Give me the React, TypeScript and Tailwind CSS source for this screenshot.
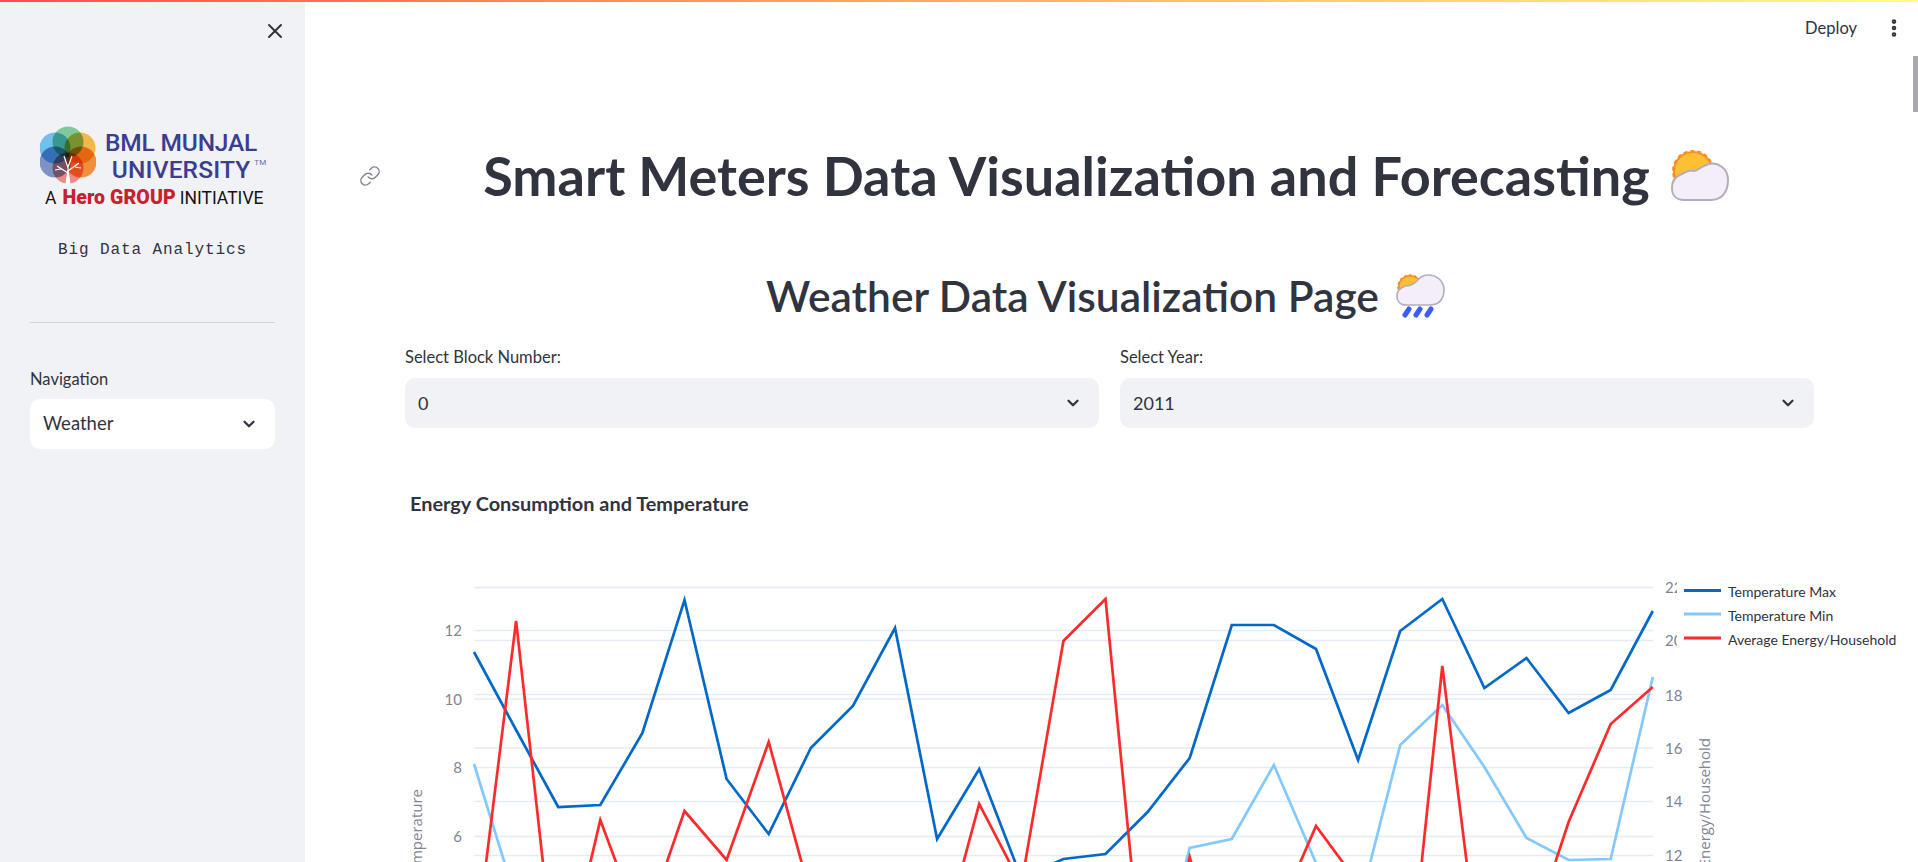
import { Link, X, ChevronDown, EllipsisVertical } from 'lucide-react';

const sans = "font-['Lato',sans-serif]";

const xAt = (i: number) => 474 + i * 42.1;
const toPoints = (ys: number[]) => ys.map((y, i) => `${xAt(i).toFixed(1)},${y}`).join(' ');

const tempMax = [652, 730, 807, 805, 733, 600, 779, 834, 748, 706, 628, 839, 769, 878, 859, 854, 812, 758, 625, 625, 649, 760, 631, 599, 688, 658, 713, 690, 611];
const tempMin = [764, 900, 960, 960, 960, 960, 960, 960, 960, 960, 960, 960, 960, 960, 960, 960, 1000, 848, 839, 765, 863, 910, 745, 705, 767, 838, 860, 859, 677];
const avgEnergy = [960, 621, 1000, 820, 933, 811, 860, 742, 896, 960, 960, 960, 804, 885, 641, 599, 1030, 857, 1000, 923, 826, 883, 1067, 666, 1005, 950, 822, 724, 687];

const gridLines = [587.5, 630.5, 640.5, 694.5, 699, 748, 767.5, 801.5, 836.5, 855.5];
const leftTicks = [{ label: '12', y: 631 }, { label: '10', y: 700 }, { label: '8', y: 768 }, { label: '6', y: 837 }];
const rightTicks = [{ label: '22', y: 588 }, { label: '20', y: 641 }, { label: '18', y: 696 }, { label: '16', y: 749 }, { label: '14', y: 802 }, { label: '12', y: 856 }];
const legend = [
    { label: 'Temperature Max', color: '#0068c9', y: 590.5 },
    { label: 'Temperature Min', color: '#83c9ff', y: 614 },
    { label: 'Average Energy/Household', color: '#ff2b2b', y: 638 },
];

function UniversityLogo() {
    // six overlapping petals, the overlaps darken towards the middle
    const petals = [
        { cx: 28, cy: 16, c: '#7fc99a' },
        { cx: 40, cy: 22, c: '#f4b84a' },
        { cx: 41, cy: 36, c: '#f08f3c' },
        { cx: 28, cy: 42, c: '#ee8a84' },
        { cx: 15, cy: 36, c: '#7c93c4' },
        { cx: 15, cy: 22, c: '#6fc0ee' },
    ];
    return (
        <div className="flex flex-col items-start w-[235px]">
            <div className="flex items-center h-[62px]">
                <svg width="56" height="60" viewBox="0 0 56 60" className="shrink-0 ml-[10px] isolate">
                    {petals.map((p) => (
                        <circle key={p.c} cx={p.cx} cy={p.cy} r="15.5" fill={p.c} className="mix-blend-multiply" />
                    ))}
                    <path d="M28 57V40M28 47L17 40M28 45L39 37M28 42L24 30M28 41L32 30M21 43L15 44M35 41L41 42" stroke="#fff" strokeWidth="1.2" fill="none" />
                    <path d="M25.5 58L27.5 44H28.5L30.5 58Z" fill="#fff" />
                </svg>
                <div className="ml-[9px] text-[#3a3e8f] font-medium font-['Roboto',sans-serif] leading-[27px] text-center">
                    <div className="text-[24.5px] tracking-[-0.17px] whitespace-nowrap">BML MUNJAL</div>
                    <div className="text-[24.5px] tracking-[0.15px] whitespace-nowrap">
                        <span className="relative">
                            UNIVERSITY
                            <span className="absolute left-full ml-[4px] top-[-6px] text-[8px] font-normal text-[#6a6da8]">TM</span>
                        </span>
                    </div>
                </div>
            </div>
            <div className="ml-[15px] mt-[-4px] flex items-baseline h-[22px] text-[17.5px] text-[#141414] font-['Roboto',sans-serif] whitespace-nowrap">
                <span>A</span>
                <span className="ml-[6px] text-[19.5px] text-[#c9202e] font-black tracking-[0.1px]">Hero GROUP</span>
                <span className="ml-[4px]">INITIATIVE</span>
            </div>
        </div>
    );
}

function SunCloud() {
    return (
        <svg width="58" height="52" viewBox="0 0 58 52" className="shrink-0">
            <circle cx="22" cy="21" r="20" fill="#ff8c26" strokeDasharray="4 3" stroke="#ff8c26" strokeWidth="2" />
            <circle cx="22" cy="21" r="18" fill="#fcc034" />
            <path d="M13 50C5 50 1 45 1 38C1 31 5 26 11 24C15 22 19 19 23 21C27 21 29 17 35 15C47 10 57 19 57 30C57 43 50 50 40 50Z" fill="#f3eef8" stroke="#b3adbb" strokeWidth="2" />
        </svg>
    );
}

function RainCloud() {
    return (
        <svg width="50" height="44" viewBox="0 0 50 44" className="shrink-0">
            <circle cx="14" cy="13" r="12" fill="#ff8c26" strokeDasharray="3 2" stroke="#ff8c26" strokeWidth="1.5" />
            <circle cx="14" cy="13" r="10.5" fill="#fcc034" />
            <path d="M10 31C4 31 1 27 1 22C1 17 4 14 9 12C14 12 18 10 21 7C24 3 28 1 32 1C42 1 48 8 48 16C48 25 43 31 34 31Z" fill="#f3eef8" stroke="#b3adbb" strokeWidth="1.6" />
            <path d="M9 41L13 35M20 41L24 35M31 41L35 35" stroke="#3d5cff" strokeWidth="5" strokeLinecap="round" />
        </svg>
    );
}

function Select({ label, value }: { label: string; value: string }) {
    return (
        <div className="flex-1">
            <label className="block h-[21px] text-[16.5px] leading-[21px] text-[#31333f]">{label}</label>
            <div className="mt-[10px] h-[50px] rounded-[10px] bg-[#f0f2f6] flex items-center justify-between pl-[13px] pr-[17px] text-[#31333f]">
                <span className="text-[18px]">{value}</span>
                <ChevronDown size={18} strokeWidth={3} />
            </div>
        </div>
    );
}

function EnergyChart() {
    return (
        <svg width="1513" height="382" viewBox="405 480 1513 382" className={`block ${sans}`}>
            <text x="410" y="511" fontSize="19.9" fontWeight="700" fill="#31333f">Energy Consumption and Temperature</text>

            {gridLines.map((y) => (
                <line key={y} x1="474" x2="1653" y1={y} y2={y} stroke="#e6ebf3" strokeWidth="1.3" />
            ))}

            {leftTicks.map((t) => (
                <text key={t.label} x="462" y={t.y + 5} textAnchor="end" fontSize="15" fill="#808495">{t.label}</text>
            ))}
            {rightTicks.map((t) => (
                <text key={t.label} x="1665" y={t.y + 5} fontSize="15" fill="#808495">{t.label}</text>
            ))}

            <text transform="translate(422 789) rotate(-90)" textAnchor="end" fontSize="15" fill="#808495" fontFamily="'Open Sans',sans-serif">Temperature</text>
            <text transform="translate(1710 738) rotate(-90)" textAnchor="end" fontSize="15" fill="#808495" fontFamily="'Open Sans',sans-serif">Energy/Household</text>

            <polyline points={toPoints(tempMax)} fill="none" stroke="#0068c9" strokeWidth="2.7" />
            <polyline points={toPoints(tempMin)} fill="none" stroke="#83c9ff" strokeWidth="2.7" />
            <polyline points={toPoints(avgEnergy)} fill="none" stroke="#ff2b2b" strokeWidth="2.7" />

            <rect x="1677" y="578" width="241" height="72" fill="#fff" />
            {legend.map((l) => (
                <g key={l.label}>
                    <line x1="1684" x2="1721" y1={l.y} y2={l.y} stroke={l.color} strokeWidth="2.8" />
                    <text x="1728" y={l.y + 6.5} fontSize="14" fill="#31333f">{l.label}</text>
                </g>
            ))}
        </svg>
    );
}

export default function App() {
    return (
        <div className={`relative flex h-[862px] overflow-hidden bg-white text-[#31333f] ${sans}`}>
            {/* Top decoration */}
            <div className="absolute top-0 left-0 right-0 z-10 h-[2px] bg-gradient-to-r from-[#ff4b4b] to-[#fffd80]" />

            {/* Sidebar */}
            <aside className="w-[305px] shrink-0 bg-[#f0f2f6] px-[30px] flex flex-col">
                <div className="h-[31px] mt-[19px] flex justify-end -mr-[12px]">
                    <X size={24} strokeWidth={2} className="text-[#31333f]" />
                </div>
                <div className="mt-[75px]">
                    <UniversityLogo />
                </div>
                <p className="mt-[33px] h-[24px] leading-[24px] text-center whitespace-nowrap font-['Liberation_Mono',monospace] text-[16px] tracking-[0.9px] text-[#31333f]">Big Data Analytics</p>
                <hr className="mt-[60px] border-t-[1.5px] border-[#d2d3d9]" />
                <label className="mt-[46px] h-[21px] text-[16.5px] leading-[21px]">Navigation</label>
                <div className="mt-[9px] h-[50px] rounded-[10px] bg-white flex items-center justify-between pl-[13px] pr-[17px]">
                    <span className="text-[18.5px]">Weather</span>
                    <ChevronDown size={18} strokeWidth={3} />
                </div>
            </aside>

            {/* Main */}
            <main className="relative flex-1 min-w-0 pl-[100px] pr-[104px]">
                <header className="absolute top-0 left-0 right-0 h-[56px] flex items-center justify-end pr-[13px] gap-[26px]">
                    <span className="text-[16.5px]">Deploy</span>
                    <EllipsisVertical size={22} strokeWidth={3} />
                </header>

                <div className="relative mt-[148px] h-[56px] flex items-center justify-center gap-[21px] whitespace-nowrap pr-[7px]">
                    <Link size={22} strokeWidth={1.6} className="absolute left-[-46px] top-[17px] text-[#808495]" />
                    <h1 className="text-[54px] font-bold leading-[56px]">Smart Meters Data Visualization and Forecasting</h1>
                    <SunCloud />
                </div>

                <div className="mt-[68px] h-[48px] flex items-center justify-center gap-[17px] whitespace-nowrap pr-[7px]">
                    <h2 className="text-[42.5px] font-semibold leading-[48px]">Weather Data Visualization Page</h2>
                    <RainCloud />
                </div>

                <div className="mt-[27px] flex gap-[21px]">
                    <Select label="Select Block Number:" value="0" />
                    <Select label="Select Year:" value="2011" />
                </div>

                <div className="mt-[52px] w-[1513px]">
                    <EnergyChart />
                </div>

                {/* Scrollbar thumb */}
                <div className="absolute top-[56px] right-0 w-[5px] h-[56px] bg-[#a9a9b0]" />
            </main>
        </div>
    );
}
